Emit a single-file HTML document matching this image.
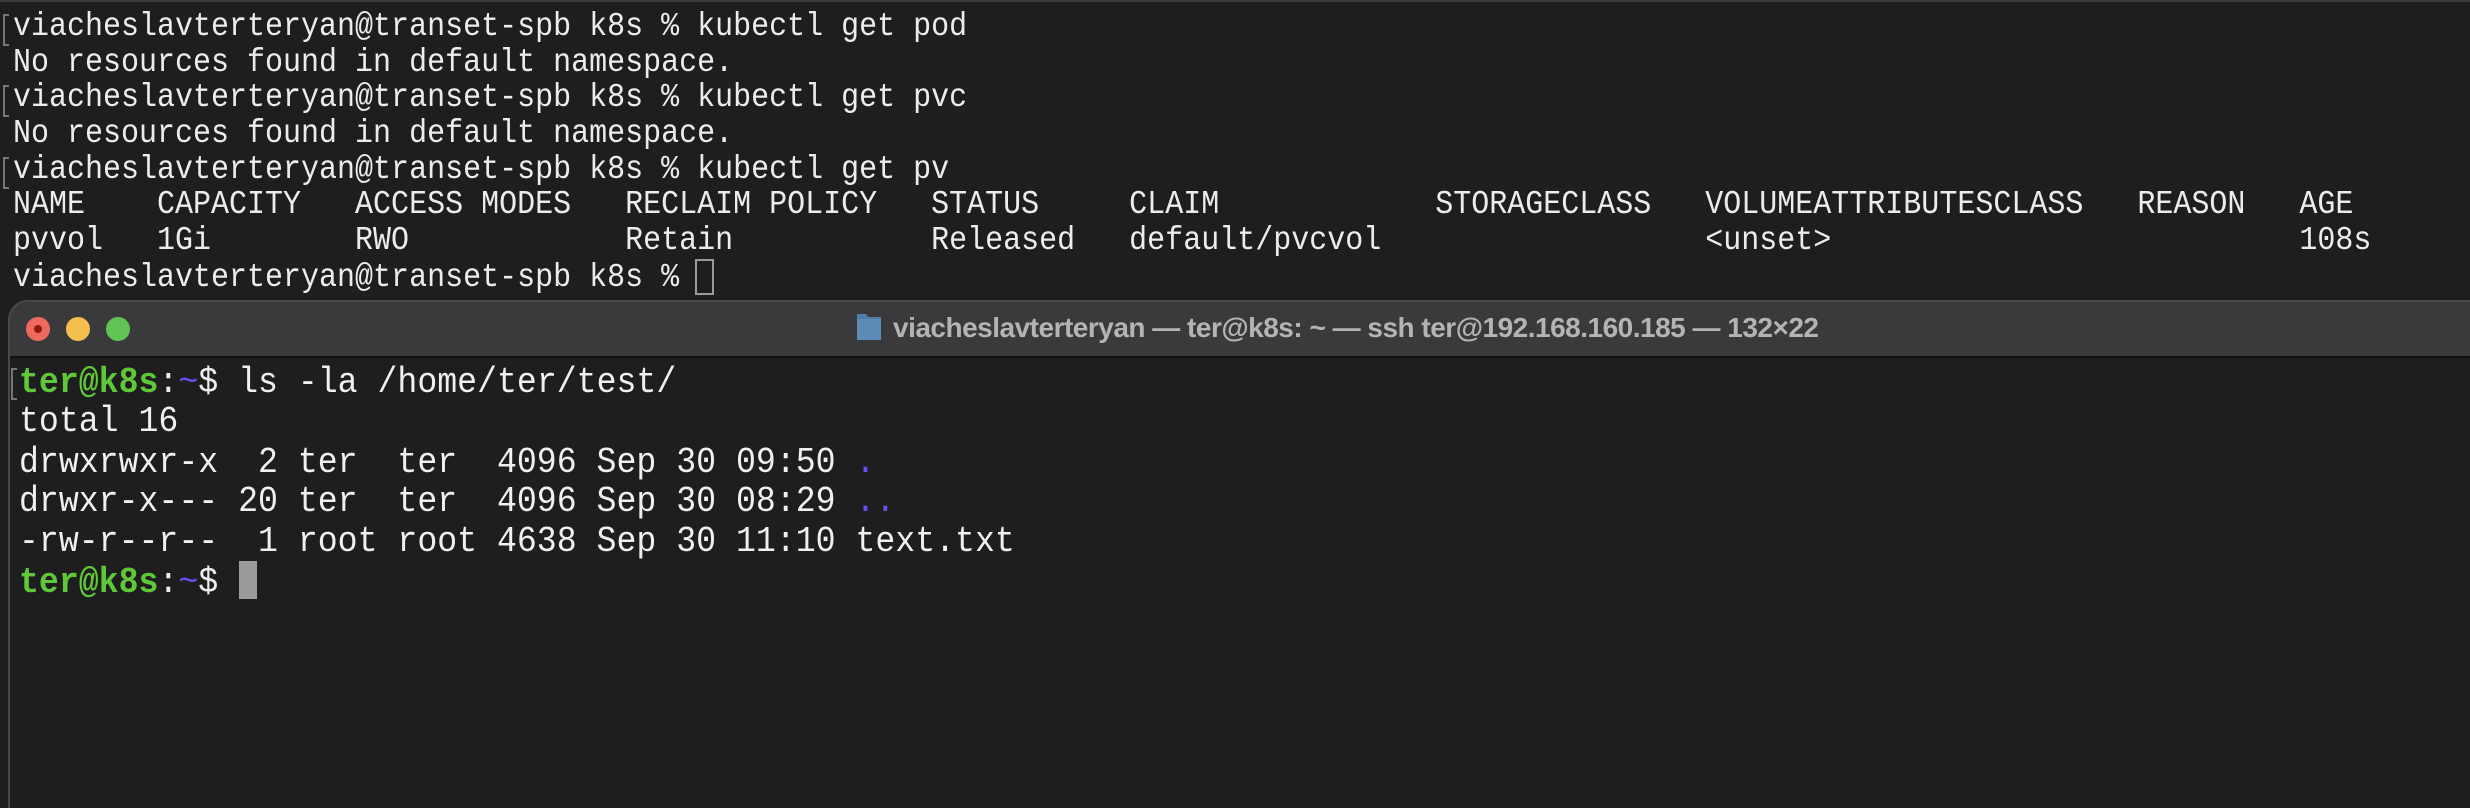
<!DOCTYPE html>
<html><head><meta charset="utf-8"><style>
html,body{margin:0;padding:0;width:2470px;height:808px;overflow:hidden;}
body{background:#1e1e1e;position:relative;font-family:"Liberation Mono","DejaVu Sans Mono",monospace;}
.top{position:absolute;left:0;top:0;width:2470px;height:300px;background:#1e1e1e;border-top:2px solid #3a3a3a;}
.tl{position:absolute;left:13px;font-size:30px;line-height:36px;height:36px;color:#ececec;white-space:pre;transform:scaleY(1.12);transform-origin:left center;}
.br{position:absolute;left:3px;width:4px;height:28px;border:2px solid #777;border-right:none;}
.win{position:absolute;left:8px;top:300px;width:2460px;height:506px;background:#1e1e1e;border:2px solid #4a4a4a;border-right:none;border-bottom:none;border-radius:20px 0 0 0;overflow:hidden;}
.bar{position:absolute;left:0;top:0;width:100%;height:54px;background:#3a3a3c;border-bottom:2px solid #111;}
.dot{position:absolute;top:15px;width:24px;height:24px;border-radius:50%;}
.title{position:absolute;left:883px;top:10px;font-family:"Liberation Sans",sans-serif;font-weight:bold;font-size:28px;color:#b4b4b6;white-space:pre;letter-spacing:-0.5px;}
.bl{position:absolute;left:9px;font-size:33.2px;line-height:40px;color:#f0f0f0;white-space:pre;transform:scaleY(1.1);transform-origin:left center;}
.g{color:#5fc838;font-weight:bold;}
.p{color:#6a4ef0;}
</style></head><body>
<div class="top">
<div class="tl" style="top:7px">viacheslavterteryan@transet-spb k8s % kubectl get pod</div>
<div class="tl" style="top:43px">No resources found in default namespace.</div>
<div class="tl" style="top:78px">viacheslavterteryan@transet-spb k8s % kubectl get pvc</div>
<div class="tl" style="top:114px">No resources found in default namespace.</div>
<div class="tl" style="top:150px">viacheslavterteryan@transet-spb k8s % kubectl get pv</div>
<div class="tl" style="top:185px">NAME    CAPACITY   ACCESS MODES   RECLAIM POLICY   STATUS     CLAIM            STORAGECLASS   VOLUMEATTRIBUTESCLASS   REASON   AGE</div>
<div class="tl" style="top:221px">pvvol   1Gi        RWO            Retain           Released   default/pvcvol                  &lt;unset&gt;                          108s</div>
<div class="tl" style="top:258px">viacheslavterteryan@transet-spb k8s % </div>
<div style="position:absolute;left:695px;top:257px;width:15px;height:32px;border:2px solid #9a9a9a;"></div>
<div class="br" style="top:12px"></div>
<div class="br" style="top:83px"></div>
<div class="br" style="top:155px"></div>
</div>
<div class="win">
<div class="bar">
<div class="dot" style="left:16px;background:#ee6a5f;"><div style="position:absolute;left:8px;top:8px;width:8px;height:8px;border-radius:50%;background:#8c1a10;"></div></div>
<div class="dot" style="left:56px;background:#f5bf4f;"></div>
<div class="dot" style="left:96px;background:#5fc454;"></div>
<svg style="position:absolute;left:845px;top:11px" width="28" height="28" viewBox="0 0 28 28"><path d="M2 1h9l2 3h13v23H2z" fill="#4f7fa8"/><path d="M2 6h24v21H2z" fill="#5b8db8"/></svg>
<div class="title">viacheslavterteryan — ter@k8s: ~ — ssh ter@192.168.160.185 — 132×22</div>
</div>
<div class="bl" style="top:60px"><span class="g">ter@k8s</span>:<span class="p">~</span>$ ls -la /home/ter/test/</div>
<div class="bl" style="top:99px">total 16</div>
<div class="bl" style="top:140px">drwxrwxr-x  2 ter  ter  4096 Sep 30 09:50 <span class="p">.</span></div>
<div class="bl" style="top:179px">drwxr-x--- 20 ter  ter  4096 Sep 30 08:29 <span class="p">..</span></div>
<div class="bl" style="top:219px">-rw-r--r--  1 root root 4638 Sep 30 11:10 text.txt</div>
<div class="bl" style="top:260px"><span class="g">ter@k8s</span>:<span class="p">~</span>$ </div>
<div style="position:absolute;left:229px;top:259px;width:18px;height:38px;background:#9a9a9a;"></div>
<div class="br" style="top:66px;left:1px;"></div>
</div>
</body></html>
